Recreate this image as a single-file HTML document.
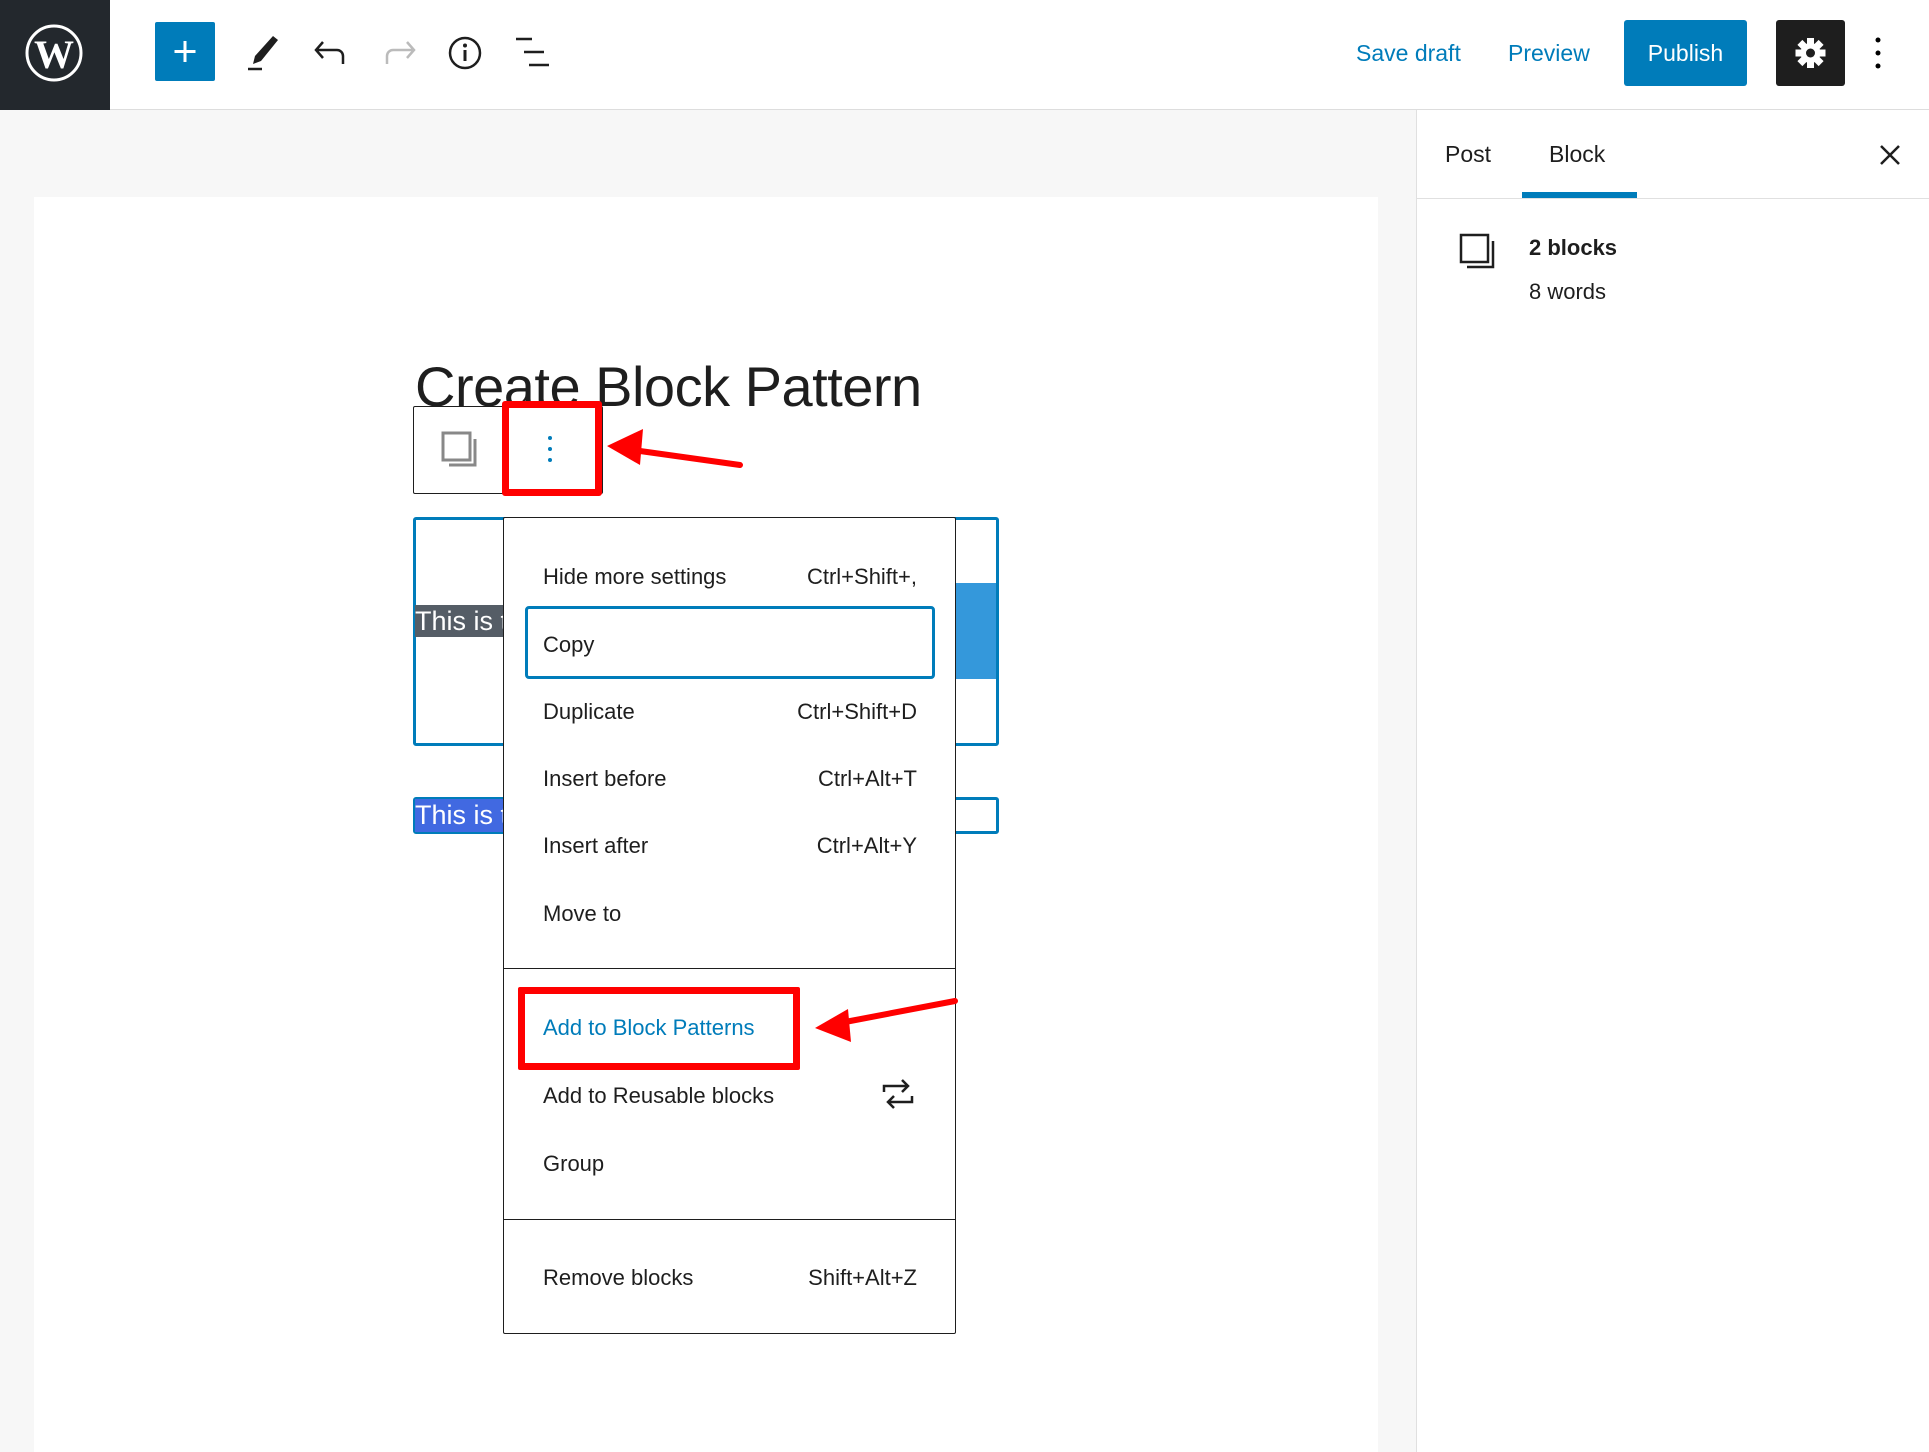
<!DOCTYPE html>
<html><head><meta charset="utf-8"><style>
*{margin:0;padding:0;box-sizing:border-box}
body{width:1929px;height:1452px;overflow:hidden;background:#f7f7f7;font-family:"Liberation Sans",sans-serif;color:#1e1e1e;position:relative}
.a{position:absolute}
.top{left:0;top:0;width:1929px;height:110px;background:#fff;border-bottom:1px solid #ddd}
.mi{position:absolute;left:543px;font-size:22px;transform:translateY(-50%)}
.sc{position:absolute;right:39px;font-size:22px;transform:translateY(-50%)}
</style></head><body>
<div class="a top"></div>
<div class="a" style="left:0;top:0;width:110px;height:110px;background:#23282d">
<svg width="110" height="110" viewBox="0 0 110 110"><circle cx="54" cy="53" r="27" fill="none" stroke="#fff" stroke-width="3"/><text x="54" y="68" text-anchor="middle" font-family="Liberation Serif" font-size="40" font-weight="bold" fill="#fff">W</text></svg></div>
<div class="a" style="left:155px;top:22px;width:60px;height:59px;background:#007cba;border-radius:2px"><svg width="60" height="59"><path d="M30 19v21M19.5 29.5h21" stroke="#fff" stroke-width="3"/></svg></div>
<svg class="a" style="left:245px;top:33px" width="36" height="40"><path d="M28 3l5 4-17 21-8 3 2-8z" fill="#1e1e1e"/><path d="M3 36h14" stroke="#1e1e1e" stroke-width="2.5"/></svg>
<svg class="a" style="left:313px;top:38px" width="36" height="30"><path d="M10 4l-7 8 7 8M3 12h21a6 6 0 0 1 6 6v8" fill="none" stroke="#1e1e1e" stroke-width="2.5"/></svg>
<svg class="a" style="left:381px;top:38px" width="36" height="30"><path d="M26 4l7 8-7 8M33 12H12a6 6 0 0 0-6 6v8" fill="none" stroke="#bbb" stroke-width="2.5"/></svg>
<svg class="a" style="left:446px;top:34px" width="38" height="38"><circle cx="19" cy="19" r="15" fill="none" stroke="#1e1e1e" stroke-width="2.5"/><path d="M19 16v11" stroke="#1e1e1e" stroke-width="3"/><circle cx="19" cy="11.5" r="2" fill="#1e1e1e"/></svg>
<svg class="a" style="left:514px;top:36px" width="40" height="34"><path d="M2 3h16M10 16h20M15 29h20" stroke="#1e1e1e" stroke-width="2.5"/></svg>
<div class="a" style="left:1356px;top:40px;font-size:23px;color:#007cba">Save draft</div>
<div class="a" style="left:1508px;top:40px;font-size:23px;color:#007cba">Preview</div>
<div class="a" style="left:1624px;top:20px;width:123px;height:66px;background:#007cba;border-radius:3px;color:#fff;font-size:23px;text-align:center;line-height:66px">Publish</div>
<div class="a" style="left:1776px;top:20px;width:69px;height:66px;background:#1e1e1e;border-radius:3px"><svg width="69" height="66" viewBox="0 0 69 66"><g transform="translate(34.5 33)" fill="#fff"><circle r="10"/><g id="t"><rect x="-3.5" y="-15" width="7" height="30"/></g><use href="#t" transform="rotate(45)"/><use href="#t" transform="rotate(90)"/><use href="#t" transform="rotate(135)"/></g><circle cx="34.5" cy="33" r="4.5" fill="#1e1e1e"/></svg></div>
<svg class="a" style="left:1870px;top:35px" width="16" height="36"><circle cx="8" cy="5" r="2.5"/><circle cx="8" cy="18" r="2.5"/><circle cx="8" cy="31" r="2.5"/></svg>
<!-- sidebar -->
<div class="a" style="left:1416px;top:110px;width:513px;height:1342px;background:#fff;border-left:1px solid #e0e0e0"></div>
<div class="a" style="left:1416px;top:198px;width:513px;height:1px;background:#e0e0e0"></div>
<div class="a" style="left:1445px;top:141px;font-size:23px">Post</div>
<div class="a" style="left:1549px;top:141px;font-size:23px">Block</div>
<div class="a" style="left:1522px;top:192px;width:115px;height:6px;background:#007cba"></div>
<svg class="a" style="left:1877px;top:142px" width="26" height="26"><path d="M4 4l18 18M22 4L4 22" stroke="#1e1e1e" stroke-width="2.5"/></svg>
<svg class="a" style="left:1458px;top:232px" width="40" height="40"><rect x="3" y="3" width="27" height="27" fill="none" stroke="#1e1e1e" stroke-width="2.5"/><path d="M35 9v26H9" fill="none" stroke="#1e1e1e" stroke-width="2.5"/></svg>
<div class="a" style="left:1529px;top:235px;font-size:22px;font-weight:bold">2 blocks</div>
<div class="a" style="left:1529px;top:279px;font-size:22px">8 words</div>
<!-- canvas -->
<div class="a" style="left:34px;top:197px;width:1344px;height:1255px;background:#fff"></div>
<div class="a" style="left:415px;top:354px;font-size:56px;white-space:nowrap;letter-spacing:-0.5px">Create Block Pattern</div>
<div class="a" style="left:413px;top:406px;width:190px;height:88px;background:#fff;border:1px solid #1e1e1e;border-radius:2px"></div>
<svg class="a" style="left:440px;top:430px" width="40" height="40"><rect x="3" y="3" width="27" height="27" fill="none" stroke="#888" stroke-width="3"/><path d="M35 9v26H9" fill="none" stroke="#888" stroke-width="3"/></svg>
<svg class="a" style="left:544px;top:434px" width="12" height="32"><circle cx="6" cy="4" r="2" fill="#007cba"/><circle cx="6" cy="15" r="2" fill="#007cba"/><circle cx="6" cy="26" r="2" fill="#007cba"/></svg>
<div class="a" style="left:502px;top:401px;width:100px;height:95px;border:7px solid #f00;border-radius:3px"></div>
<div class="a" style="left:413px;top:517px;width:586px;height:229px;border:3px solid #007cba;border-radius:3px"></div>
<div class="a" style="left:415px;top:605px;width:90px;height:32px;background:#555d66;color:#fff;font-size:27px;line-height:32px;overflow:hidden;white-space:nowrap">This is t</div>
<div class="a" style="left:956px;top:583px;width:40px;height:96px;background:#3498db"></div>
<div class="a" style="left:413px;top:797px;width:586px;height:37px;border:3px solid #007cba;border-radius:3px"></div>
<div class="a" style="left:415px;top:799px;width:90px;height:33px;background:#4169e1;color:#fff;font-size:27px;line-height:33px;overflow:hidden;white-space:nowrap">This is t</div>
<!-- menu -->
<div class="a" style="left:503px;top:517px;width:453px;height:817px;background:#fff;border:1px solid #1e1e1e;border-radius:2px">
<div class="a" style="left:0;top:450px;width:451px;height:1px;background:#1e1e1e"></div>
<div class="a" style="left:0;top:701px;width:451px;height:1px;background:#1e1e1e"></div>
<div class="a" style="left:21px;top:88px;width:410px;height:73px;border:3px solid #007cba;border-radius:4px"></div>
</div>
<div class="mi" style="top:577px">Hide more settings</div><div class="sc" style="top:577px;right:1012px">Ctrl+Shift+,</div>
<div class="mi" style="top:645px">Copy</div>
<div class="mi" style="top:712px">Duplicate</div><div class="sc" style="top:712px;right:1012px">Ctrl+Shift+D</div>
<div class="mi" style="top:779px">Insert before</div><div class="sc" style="top:779px;right:1012px">Ctrl+Alt+T</div>
<div class="mi" style="top:846px">Insert after</div><div class="sc" style="top:846px;right:1012px">Ctrl+Alt+Y</div>
<div class="mi" style="top:914px">Move to</div>
<div class="mi" style="top:1028px;color:#007cba">Add to Block Patterns</div>
<div class="mi" style="top:1096px">Add to Reusable blocks</div>
<svg class="a" style="left:880px;top:1076px" width="36" height="36"><path d="M4 16v-6h24M22 4l6 6-6 6M32 20v6H8M14 32l-6-6 6-6" fill="none" stroke="#1e1e1e" stroke-width="2.5"/></svg>
<div class="mi" style="top:1164px">Group</div>
<div class="mi" style="top:1278px">Remove blocks</div><div class="sc" style="top:1278px;right:1012px">Shift+Alt+Z</div>
<div class="a" style="left:518px;top:987px;width:282px;height:83px;border:7px solid #f00;border-radius:2px"></div>
<svg class="a" style="left:0;top:0" width="1929" height="1452"><path d="M740 465L640 451" stroke="#f00" stroke-width="6" stroke-linecap="round"/><path d="M607 446l36-17-3 36z" fill="#f00"/><path d="M955 1001L845 1022" stroke="#f00" stroke-width="6" stroke-linecap="round"/><path d="M815 1028l33-19 3 33z" fill="#f00"/></svg>
</body></html>
